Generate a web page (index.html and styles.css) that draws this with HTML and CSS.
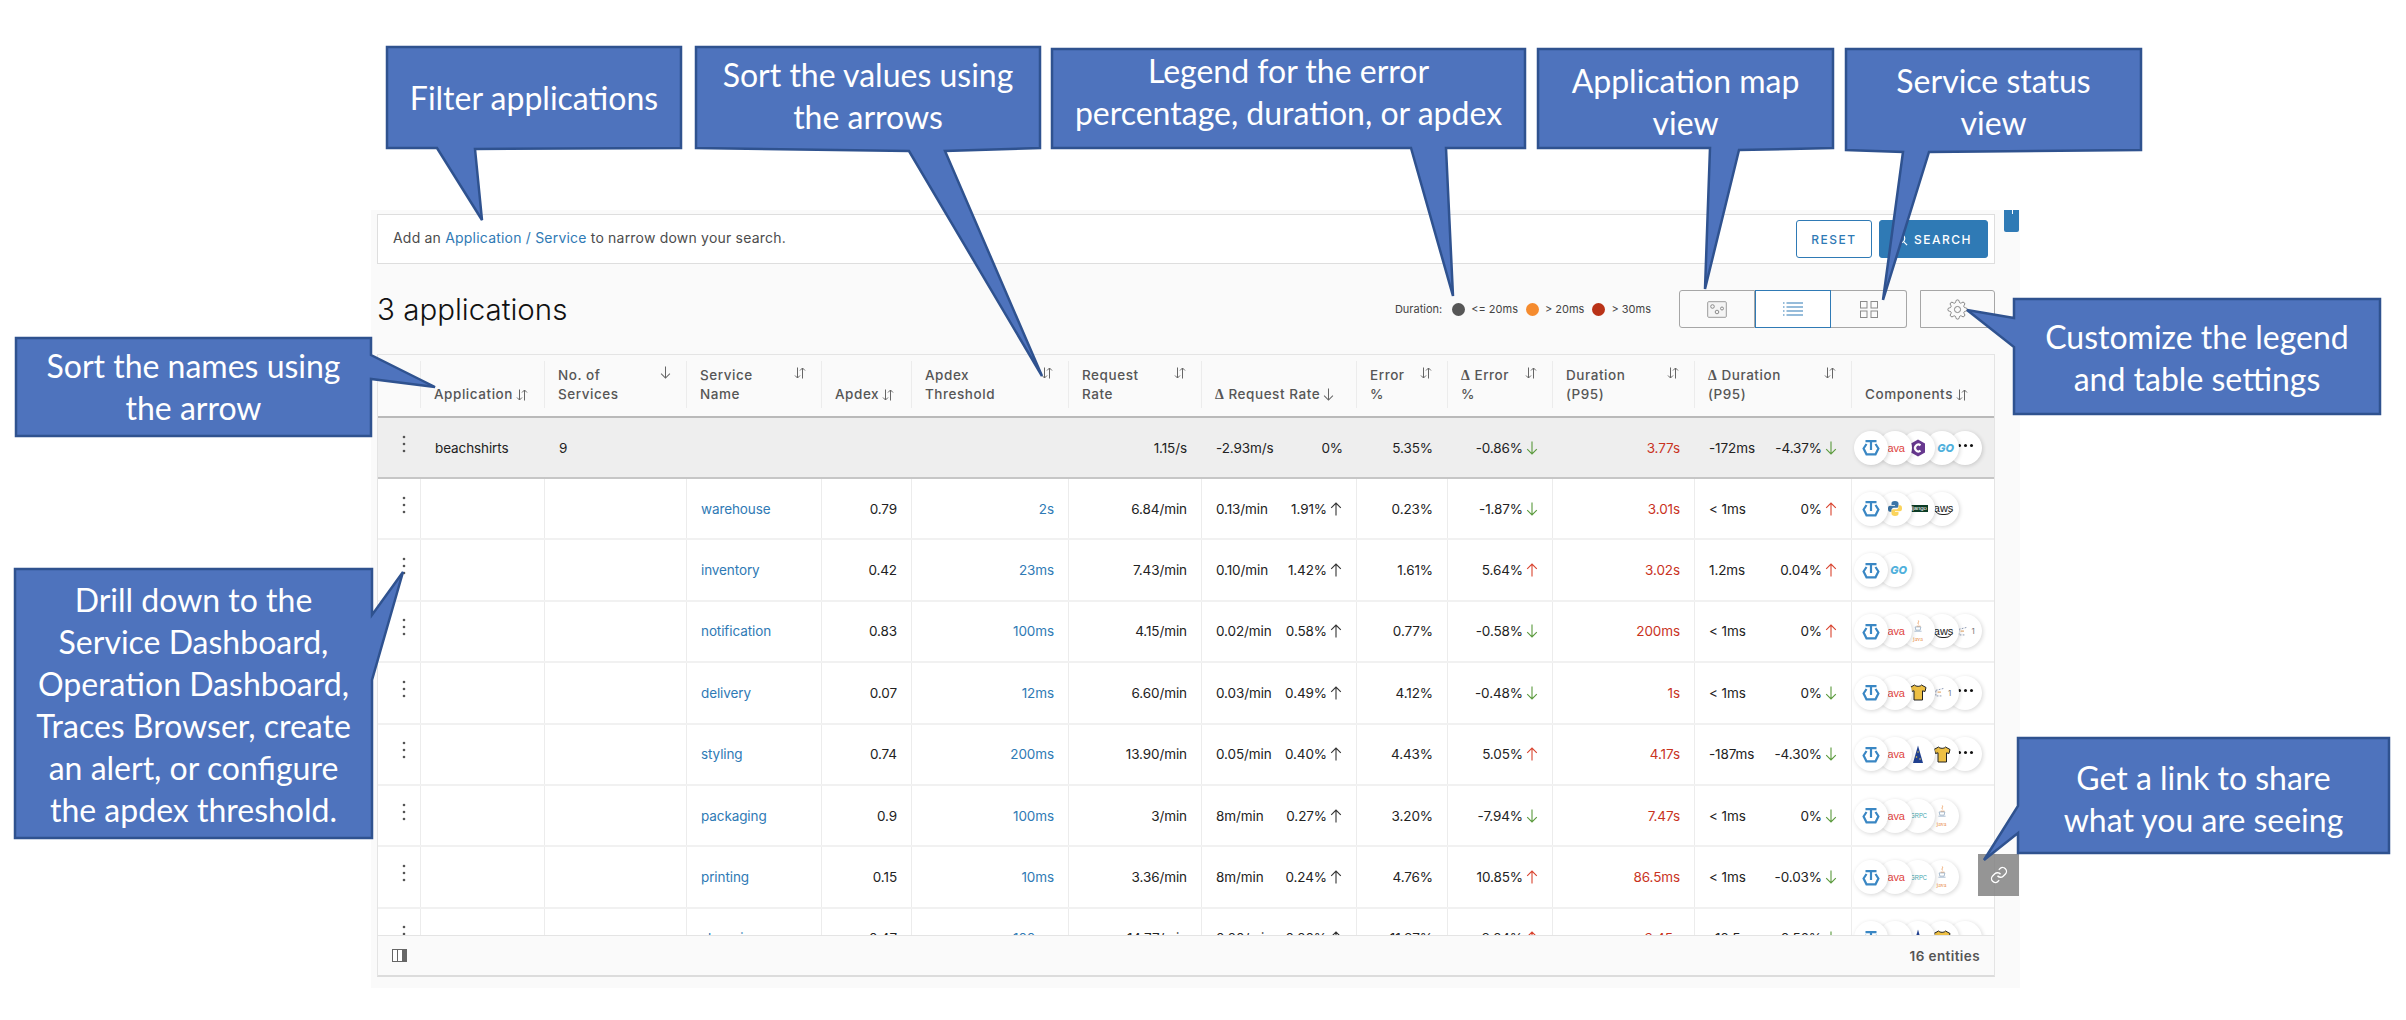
FILE: index.html
```html
<!DOCTYPE html>
<html lang="en">
<head>
<meta charset="utf-8">
<title>Applications</title>
<link rel="stylesheet" href="styles.css">
</head>
<body>
<svg class="defs" width="0" height="0" aria-hidden="true">
  <symbol id="up" viewBox="0 0 12 14"><path d="M6 13.5V1M1.2 5.8 6 1l4.8 4.8" fill="none" stroke="currentColor" stroke-width="1.1"/></symbol>
  <symbol id="down" viewBox="0 0 12 14"><path d="M6 .5V13M1.2 8.2 6 13l4.8-4.8" fill="none" stroke="currentColor" stroke-width="1.1"/></symbol>
  <symbol id="sort" viewBox="0 0 12 12"><path d="M3.500 .5v10.500M1 8.500 3.500 11 6 8.500M8.500 11.500V1M6 3.500 8.500 1 11 3.500" fill="none" stroke="currentColor" stroke-width="1"/></symbol>
  <symbol id="kebab" viewBox="0 0 4 18"><circle cx="2" cy="2" r="1.300"/><circle cx="2" cy="9" r="1.300"/><circle cx="2" cy="16" r="1.300"/></symbol>
  <symbol id="tlogo" viewBox="0 0 18 17"><path d="M4.500 5 1.600 9.500 4.500 15.300H13.500L16.400 9.500 13.500 5M3.500 2.200H14.500M9 2.200V11" fill="none" stroke="#3a87c4" stroke-width="2.200"/></symbol>
  <symbol id="python" viewBox="0 0 16 17"><path d="M8 1C5 1 4.500 2 4.500 3.500V5H8v.7H3C1.500 5.700 1 7 1 8.700s.6 3 2 3h1.500V10c0-1.300 1-2.300 2.300-2.300h3c1 0 1.700-.8 1.700-1.800V3.500C11.500 2 10.500 1 8 1z" fill="#3a75a8"/><path d="M8 16c3 0 3.500-1 3.500-2.500V12H8v-.7h5c1.500 0 2-1.300 2-3s-.6-3-2-3h-1.500V7c0 1.300-1 2.300-2.300 2.300h-3c-1 0-1.700.8-1.700 1.800v2.400C4.500 15 5.500 16 8 16z" fill="#fbd45c"/></symbol>
  <symbol id="cup" viewBox="0 0 14 22"><path d="M7.500 .5c1.500 2-1.800 3 .2 5.500M5 8.500h5.500" fill="none" stroke="#e8873a" stroke-width="1"/><path d="M3 9.500h8l-1 4.500H4zM2 15.500h10" fill="none" stroke="#8aa5c0" stroke-width="1"/></symbol>
  <symbol id="shirt" viewBox="0 0 18 17"><path d="M5.500 1 1 3.500l1.500 4L5 6.800V16h8.500V6.800l2.500.7 1-4L12.500 1C11.800 2.800 6.500 2.800 5.500 1z" fill="#eec044" stroke="#222" stroke-width="1"/></symbol>
  <symbol id="hat" viewBox="0 0 12 19"><path d="M6 .5 11 18H1z" fill="#1f3f8f"/><circle cx="6" cy="7" r=".7" fill="#f1cf45"/><circle cx="4.500" cy="12" r=".8" fill="#f1cf45"/><circle cx="8" cy="14" r=".8" fill="#f1cf45"/></symbol>
  <symbol id="csharp" viewBox="0 0 16 18"><path d="M8 .5 15 4.500v9L8 17.500 1 13.500v-9z" fill="#67388f"/><path d="M10.500 6.300A3.400 3.400 0 1 0 10.500 11.700" fill="none" stroke="#fff" stroke-width="2.200"/></symbol>
  <symbol id="dash" viewBox="0 0 14 12"><path d="M1 3.500 11 1M1 4v6h8" fill="none" stroke="#7d8ca8" stroke-width="1" stroke-dasharray="2 1.500"/><path d="M3 5.500h4" stroke="#e7b078" stroke-width="1.500"/></symbol>
  <symbol id="gear" viewBox="0 0 24 24"><circle cx="12" cy="12" r="3.500" fill="none" stroke="currentColor"/><path fill="none" stroke="currentColor" d="M19.400 15a1.650 1.650 0 0 0 .33 1.820l.06.06a2 2 0 0 1 0 2.830 2 2 0 0 1-2.830 0l-.06-.06a1.650 1.650 0 0 0-1.820-.33 1.650 1.650 0 0 0-1 1.510V21a2 2 0 0 1-2 2 2 2 0 0 1-2-2v-.09A1.650 1.650 0 0 0 9 19.400a1.650 1.650 0 0 0-1.820.33l-.06.06a2 2 0 0 1-2.830 0 2 2 0 0 1 0-2.830l.06-.06a1.650 1.650 0 0 0 .33-1.820 1.650 1.650 0 0 0-1.510-1H3a2 2 0 0 1-2-2 2 2 0 0 1 2-2h.09A1.650 1.650 0 0 0 4.600 9a1.650 1.650 0 0 0-.33-1.820l-.06-.06a2 2 0 0 1 0-2.830 2 2 0 0 1 2.830 0l.06.06a1.650 1.650 0 0 0 1.820.33H9a1.650 1.650 0 0 0 1-1.510V3a2 2 0 0 1 2-2 2 2 0 0 1 2 2v.09a1.650 1.650 0 0 0 1 1.510 1.650 1.650 0 0 0 1.820-.33l.06-.06a2 2 0 0 1 2.830 0 2 2 0 0 1 0 2.830l-.06.06a1.650 1.650 0 0 0-.33 1.820V9a1.650 1.650 0 0 0 1.510 1H21a2 2 0 0 1 2 2 2 2 0 0 1-2 2h-.09a1.650 1.650 0 0 0-1.510 1z"/></symbol>
</svg>

<main class="panel">
  <section class="filter">
    <p class="hint">Add an <a class="lnk">Application / Service</a> to narrow down your search.</p>
    <button class="btn btn-line">RESET</button>
    <button class="btn btn-solid"><svg class="ic-search" viewBox="0 0 14 14"><circle cx="6" cy="6" r="4.500" fill="none" stroke="#fff" stroke-width="1.300"/><path d="M9.500 9.500 13 13" stroke="#fff" stroke-width="1.300"/></svg>SEARCH</button>
  </section>

  <section class="bar">
    <h1 class="title">3 applications</h1>
    <div class="legend">
      <span class="leg-name">Duration:</span>
      <span class="leg-item"><i class="dot d-gray"></i>&lt;= 20ms</span>
      <span class="leg-item"><i class="dot d-orange"></i>&gt; 20ms</span>
      <span class="leg-item"><i class="dot d-red"></i>&gt; 30ms</span>
    </div>
    <div class="views">
      <button class="vbtn"><svg class="ic-map" viewBox="0 0 20 17"><rect x=".7" y=".7" width="18.600" height="15.600" rx="1" fill="#f4f4f4" stroke="#9a9a9a"/><circle cx="5.500" cy="5.500" r="1.800" fill="none" stroke="#8a8a8a"/><circle cx="10" cy="11" r="1.800" fill="none" stroke="#8a8a8a"/><circle cx="15" cy="7.500" r="1.500" fill="none" stroke="#8a8a8a"/></svg></button>
      <button class="vbtn vbtn-on"><svg class="ic-list" viewBox="0 0 20 14"><path d="M3.500 1H20M3.500 5H20M3.500 9H20M3.500 13H20M0 1h1.500M0 5h1.500M0 9h1.500M0 13h1.500" stroke="#2f7ab5" stroke-width="1.200"/></svg></button>
      <button class="vbtn"><svg class="ic-grid" viewBox="0 0 18 17"><g fill="none" stroke="#8a8a8a"><rect x=".5" y=".5" width="6.500" height="6.500"/><rect x="11" y=".5" width="6.500" height="6.500"/><rect x=".5" y="10" width="6.500" height="6.500"/><rect x="11" y="10" width="6.500" height="6.500"/></g></svg></button>
    </div>
    <button class="vbtn vbtn-solo"><svg class="ic-gear"><use href="#gear"/></svg></button>
  </section>

  <section class="table">
    <div class="row head">
      <div class="th"></div>
      <div class="th"><span>Application</span><svg class="s-in"><use href="#sort"/></svg></div>
      <div class="th th-2"><span>No. of<br>Services</span><svg class="a-top"><use href="#down"/></svg></div>
      <div class="th th-2"><span>Service<br>Name</span><svg class="s-top"><use href="#sort"/></svg></div>
      <div class="th"><span>Apdex</span><svg class="s-in"><use href="#sort"/></svg></div>
      <div class="th th-2"><span>Apdex<br>Threshold</span><svg class="s-top"><use href="#sort"/></svg></div>
      <div class="th th-2"><span>Request<br>Rate</span><svg class="s-top"><use href="#sort"/></svg></div>
      <div class="th"><span><b class="delta">Δ</b> Request Rate</span><svg class="a-in"><use href="#down"/></svg></div>
      <div class="th th-2"><span>Error<br>%</span><svg class="s-top"><use href="#sort"/></svg></div>
      <div class="th th-2"><span><b class="delta">Δ</b> Error<br>%</span><svg class="s-top"><use href="#sort"/></svg></div>
      <div class="th th-2"><span>Duration<br>(P95)</span><svg class="s-top"><use href="#sort"/></svg></div>
      <div class="th th-2"><span><b class="delta">Δ</b> Duration<br>(P95)</span><svg class="s-top"><use href="#sort"/></svg></div>
      <div class="th th-end"><span>Components</span><svg class="s-in"><use href="#sort"/></svg></div>
    </div>

    <div class="row group">
      <div class="td td-k"><svg class="kebab"><use href="#kebab"/></svg></div>
      <div class="td">beachshirts</div>
      <div class="td">9</div>
      <div class="td"></div>
      <div class="td"></div>
      <div class="td"></div>
      <div class="td r">1.15/s</div>
      <div class="td sp"><span>-2.93m/s</span><span class="pct0">0%</span></div>
      <div class="td r">5.35%</div>
      <div class="td r">-0.86%<svg class="ar ar-g"><use href="#down"/></svg></div>
      <div class="td r red">3.77s</div>
      <div class="td sp"><span>-172ms</span><span class="pa">-4.37%<svg class="ar ar-g"><use href="#down"/></svg></span></div>
      <div class="td comps">
        <span class="ci"><svg class="lg-t"><use href="#tlogo"/></svg></span><span class="ci"><span class="java">java</span></span><span class="ci"><svg class="lg-c"><use href="#csharp"/></svg></span><span class="ci"><span class="go">GO</span></span><span class="ci"><span class="more"><i></i><i></i><i></i></span></span>
      </div>
    </div>

    <div class="rows">
      <div class="row">
        <div class="td td-k"><svg class="kebab"><use href="#kebab"/></svg></div><div class="td"></div><div class="td"></div>
        <div class="td"><a class="lnk">warehouse</a></div><div class="td r">0.79</div><div class="td r"><a class="lnk">2s</a></div><div class="td r">6.84/min</div>
        <div class="td sp"><span>0.13/min</span><span class="pa">1.91%<svg class="ar"><use href="#up"/></svg></span></div>
        <div class="td r">0.23%</div><div class="td r">-1.87%<svg class="ar ar-g"><use href="#down"/></svg></div><div class="td r red">3.01s</div>
        <div class="td sp"><span>&lt; 1ms</span><span class="pa">0%<svg class="ar ar-r"><use href="#up"/></svg></span></div>
        <div class="td comps"><span class="ci"><svg class="lg-t"><use href="#tlogo"/></svg></span><span class="ci"><svg class="lg-p"><use href="#python"/></svg></span><span class="ci"><span class="django">django</span></span><span class="ci"><span class="aws">aws</span></span></div>
      </div>
      <div class="row">
        <div class="td td-k"><svg class="kebab"><use href="#kebab"/></svg></div><div class="td"></div><div class="td"></div>
        <div class="td"><a class="lnk">inventory</a></div><div class="td r">0.42</div><div class="td r"><a class="lnk">23ms</a></div><div class="td r">7.43/min</div>
        <div class="td sp"><span>0.10/min</span><span class="pa">1.42%<svg class="ar"><use href="#up"/></svg></span></div>
        <div class="td r">1.61%</div><div class="td r">5.64%<svg class="ar ar-r"><use href="#up"/></svg></div><div class="td r red">3.02s</div>
        <div class="td sp"><span>1.2ms</span><span class="pa">0.04%<svg class="ar ar-r"><use href="#up"/></svg></span></div>
        <div class="td comps"><span class="ci"><svg class="lg-t"><use href="#tlogo"/></svg></span><span class="ci"><span class="go">GO</span></span></div>
      </div>
      <div class="row">
        <div class="td td-k"><svg class="kebab"><use href="#kebab"/></svg></div><div class="td"></div><div class="td"></div>
        <div class="td"><a class="lnk">notification</a></div><div class="td r">0.83</div><div class="td r"><a class="lnk">100ms</a></div><div class="td r">4.15/min</div>
        <div class="td sp"><span>0.02/min</span><span class="pa">0.58%<svg class="ar"><use href="#up"/></svg></span></div>
        <div class="td r">0.77%</div><div class="td r">-0.58%<svg class="ar ar-g"><use href="#down"/></svg></div><div class="td r red">200ms</div>
        <div class="td sp"><span>&lt; 1ms</span><span class="pa">0%<svg class="ar ar-r"><use href="#up"/></svg></span></div>
        <div class="td comps"><span class="ci"><svg class="lg-t"><use href="#tlogo"/></svg></span><span class="ci"><span class="java">java</span></span><span class="ci"><span class="jlogo"><svg class="lg-j"><use href="#cup"/></svg><span>java</span></span></span><span class="ci"><span class="aws">aws</span></span><span class="ci"><span class="one"><svg class="lg-d"><use href="#dash"/></svg>1</span></span></div>
      </div>
      <div class="row">
        <div class="td td-k"><svg class="kebab"><use href="#kebab"/></svg></div><div class="td"></div><div class="td"></div>
        <div class="td"><a class="lnk">delivery</a></div><div class="td r">0.07</div><div class="td r"><a class="lnk">12ms</a></div><div class="td r">6.60/min</div>
        <div class="td sp"><span>0.03/min</span><span class="pa">0.49%<svg class="ar"><use href="#up"/></svg></span></div>
        <div class="td r">4.12%</div><div class="td r">-0.48%<svg class="ar ar-g"><use href="#down"/></svg></div><div class="td r red">1s</div>
        <div class="td sp"><span>&lt; 1ms</span><span class="pa">0%<svg class="ar ar-g"><use href="#down"/></svg></span></div>
        <div class="td comps"><span class="ci"><svg class="lg-t"><use href="#tlogo"/></svg></span><span class="ci"><span class="java">java</span></span><span class="ci"><svg class="lg-s"><use href="#shirt"/></svg></span><span class="ci"><span class="one"><svg class="lg-d"><use href="#dash"/></svg>1</span></span><span class="ci"><span class="more"><i></i><i></i><i></i></span></span></div>
      </div>
      <div class="row">
        <div class="td td-k"><svg class="kebab"><use href="#kebab"/></svg></div><div class="td"></div><div class="td"></div>
        <div class="td"><a class="lnk">styling</a></div><div class="td r">0.74</div><div class="td r"><a class="lnk">200ms</a></div><div class="td r">13.90/min</div>
        <div class="td sp"><span>0.05/min</span><span class="pa">0.40%<svg class="ar"><use href="#up"/></svg></span></div>
        <div class="td r">4.43%</div><div class="td r">5.05%<svg class="ar ar-r"><use href="#up"/></svg></div><div class="td r red">4.17s</div>
        <div class="td sp"><span>-187ms</span><span class="pa">-4.30%<svg class="ar ar-g"><use href="#down"/></svg></span></div>
        <div class="td comps"><span class="ci"><svg class="lg-t"><use href="#tlogo"/></svg></span><span class="ci"><span class="java">java</span></span><span class="ci"><svg class="lg-h"><use href="#hat"/></svg></span><span class="ci"><svg class="lg-s"><use href="#shirt"/></svg></span><span class="ci"><span class="more"><i></i><i></i><i></i></span></span></div>
      </div>
      <div class="row">
        <div class="td td-k"><svg class="kebab"><use href="#kebab"/></svg></div><div class="td"></div><div class="td"></div>
        <div class="td"><a class="lnk">packaging</a></div><div class="td r">0.9</div><div class="td r"><a class="lnk">100ms</a></div><div class="td r">3/min</div>
        <div class="td sp"><span>8m/min</span><span class="pa">0.27%<svg class="ar"><use href="#up"/></svg></span></div>
        <div class="td r">3.20%</div><div class="td r">-7.94%<svg class="ar ar-g"><use href="#down"/></svg></div><div class="td r red">7.47s</div>
        <div class="td sp"><span>&lt; 1ms</span><span class="pa">0%<svg class="ar ar-g"><use href="#down"/></svg></span></div>
        <div class="td comps"><span class="ci"><svg class="lg-t"><use href="#tlogo"/></svg></span><span class="ci"><span class="java">java</span></span><span class="ci"><span class="grpc">GRPC</span></span><span class="ci"><span class="jlogo"><svg class="lg-j"><use href="#cup"/></svg><span>java</span></span></span></div>
      </div>
      <div class="row">
        <div class="td td-k"><svg class="kebab"><use href="#kebab"/></svg></div><div class="td"></div><div class="td"></div>
        <div class="td"><a class="lnk">printing</a></div><div class="td r">0.15</div><div class="td r"><a class="lnk">10ms</a></div><div class="td r">3.36/min</div>
        <div class="td sp"><span>8m/min</span><span class="pa">0.24%<svg class="ar"><use href="#up"/></svg></span></div>
        <div class="td r">4.76%</div><div class="td r">10.85%<svg class="ar ar-r"><use href="#up"/></svg></div><div class="td r red">86.5ms</div>
        <div class="td sp"><span>&lt; 1ms</span><span class="pa">-0.03%<svg class="ar ar-g"><use href="#down"/></svg></span></div>
        <div class="td comps"><span class="ci"><svg class="lg-t"><use href="#tlogo"/></svg></span><span class="ci"><span class="java">java</span></span><span class="ci"><span class="grpc">GRPC</span></span><span class="ci"><span class="jlogo"><svg class="lg-j"><use href="#cup"/></svg><span>java</span></span></span></div>
      </div>
      <div class="row">
        <div class="td td-k"><svg class="kebab"><use href="#kebab"/></svg></div><div class="td"></div><div class="td"></div>
        <div class="td"><a class="lnk">shopping</a></div><div class="td r">0.47</div><div class="td r"><a class="lnk">100ms</a></div><div class="td r">14.77/min</div>
        <div class="td sp"><span>0.20/min</span><span class="pa">0.20%<svg class="ar"><use href="#up"/></svg></span></div>
        <div class="td r">11.87%</div><div class="td r">8.24%<svg class="ar ar-r"><use href="#up"/></svg></div><div class="td r red">3.45s</div>
        <div class="td sp"><span>-12.5ms</span><span class="pa">-0.56%<svg class="ar ar-g"><use href="#down"/></svg></span></div>
        <div class="td comps"><span class="ci"><svg class="lg-t"><use href="#tlogo"/></svg></span><span class="ci"><span class="java">java</span></span><span class="ci"><svg class="lg-h"><use href="#hat"/></svg></span><span class="ci"><svg class="lg-s"><use href="#shirt"/></svg></span><span class="ci"><span class="more"><i></i><i></i><i></i></span></span></div>
      </div>
    </div>

    <footer class="foot">
      <svg class="ic-cols" viewBox="0 0 15 13"><rect x=".5" y=".5" width="14" height="12" fill="#fff" stroke="#666"/><rect x="10" y="1" width="4" height="11" fill="#666"/><path d="M5.500 1v11" stroke="#666"/></svg>
      <span class="count">16 entities</span>
    </footer>
  </section>
</main>

<div class="tab"></div>
<button class="share"><svg class="ic-link" viewBox="0 0 24 24"><path d="M10 13a5 5 0 0 0 7.540.54l3-3a5 5 0 0 0-7.070-7.070l-1.720 1.710M14 11a5 5 0 0 0-7.540-.54l-3 3a5 5 0 0 0 7.070 7.070l1.710-1.710" fill="none" stroke="#fff" stroke-width="1.800"/></svg></button>

<svg class="shapes" viewBox="0 0 2406 1020" aria-hidden="true">
  <polygon points="387,47 681,47 681,148 475,149 482,220 437,148 387,148"/>
  <polygon points="696,47 1040,47 1040,148 945,151 1042,376 909,151 696,148"/>
  <polygon points="1052,49 1525,49 1525,148 1446,148 1453,296 1411,148 1052,148"/>
  <polygon points="1538,49 1833,49 1833,148 1739,150 1705,289 1710,148 1538,148"/>
  <polygon points="1846,49 2141,49 2141,150 1929,152 1883,300 1903,152 1846,150"/>
  <polygon points="2014,299 2380,299 2380,414 2014,414 2014,347 1967,310 2014,318"/>
  <polygon points="16,338 371,338 371,355 435,387 371,379 371,436 16,436"/>
  <polygon points="15,569 372,569 372,615 403,572 372,680 372,838 15,838"/>
  <polygon points="2018,738 2389,738 2389,853 2018,853 2018,833 1984,860 2018,806"/>
</svg>

<div class="note n-filter">Filter applications</div>
<div class="note n-sort">Sort the values using<br>the arrows</div>
<div class="note n-legend">Legend for the error<br>percentage, duration, or apdex</div>
<div class="note n-map">Application map<br>view</div>
<div class="note n-status">Service status<br>view</div>
<div class="note n-custom">Customize the legend<br>and table settings</div>
<div class="note n-names">Sort the names using<br>the arrow</div>
<div class="note n-drill">Drill down to the<br>Service Dashboard,<br>Operation Dashboard,<br>Traces Browser, create<br>an alert, or configure<br>the apdex threshold.</div>
<div class="note n-link">Get a link to share<br>what you are seeing</div>
</body>
</html>
```
FILE: styles.css
```css
* { box-sizing: border-box; }
html, body { margin: 0; padding: 0; }
body {
  position: relative;
  width: 2406px;
  height: 1020px;
  overflow: hidden;
  background: #fff;
  font-family: "Inter", "Liberation Sans", sans-serif;
  font-size: 13.5px;
  color: #222;
}
.defs { position: absolute; }
button { font-family: inherit; cursor: pointer; }
.lnk { color: #2f7ab5; }

.panel {
  width: 1649px;
  height: 778px;
  margin: 210px 0 0 371px;
  padding: 4px 25px 11px 6px;
  background: #fafafa;
  display: flex;
  flex-direction: column;
}

.filter {
  height: 50px;
  flex: none;
  display: flex;
  align-items: center;
  gap: 7px;
  padding: 0 6px 0 15px;
  background: #fff;
  border: 1px solid #dedede;
}
.hint { margin: 0 auto 4px 0; font-size: 14px; letter-spacing: .2px; color: #4c4c4c; }
.btn {
  height: 38px;
  border-radius: 3px;
  font-size: 12px;
  font-weight: 500;
  letter-spacing: 1.5px;
  border: 1px solid #2f7ab5;
  display: flex;
  align-items: center;
  justify-content: center;
}
.btn-line { width: 76px; background: #fff; color: #2f7ab5; }
.btn-solid { width: 109px; background: #2f7ab5; color: #fff; gap: 6px; }
.ic-search { width: 13px; height: 13px; }

.bar {
  height: 90px;
  flex: none;
  display: flex;
  align-items: center;
}
.title {
  margin: 0 auto 0 0;
  font-size: 29.5px;
  font-weight: 300;
  color: #111;
}
.legend {
  display: flex;
  align-items: center;
  gap: 8px;
  font-size: 11px;
  color: #444;
  margin-right: 28px;
}
.leg-name { margin-right: 2px; }
.leg-item { display: flex; align-items: center; gap: 6px; }
.dot { width: 13px; height: 13px; border-radius: 50%; display: block; }
.d-gray { background: #565656; }
.d-orange { background: #f58b2e; }
.d-red { background: #b93217; }
.views { display: flex; }
.vbtn {
  width: 76px;
  height: 38px;
  padding: 0;
  display: flex;
  align-items: center;
  justify-content: center;
  background: #fafafa;
  border: 1px solid #a6a6a6;
  border-left: 0;
}
.vbtn:first-child { border-left: 1px solid #a6a6a6; border-radius: 3px 0 0 3px; }
.vbtn:last-child { border-radius: 0 3px 3px 0; }
.vbtn-on { border: 1px solid #2f7ab5; background: #fff; }
.vbtn-solo { width: 75px; margin-left: 13px; border-left: 1px solid #a6a6a6; border-radius: 3px; color: #777; }
.ic-map { width: 20px; height: 17px; }
.ic-list { width: 20px; height: 14px; }
.ic-grid { width: 18px; height: 17px; }
.ic-gear { width: 21px; height: 21px; }

.table {
  flex: 1;
  min-height: 0;
  display: flex;
  flex-direction: column;
  border: 1px solid #e4e4e4;
  border-bottom: 2px solid #dcdcdc;
  background: #fff;
}
.row {
  display: grid;
  grid-template-columns: 43px 124px 142px 135px 90px 157px 133px 155px 91px 105px 142px 157px 142px;
  flex: none;
}
.head {
  height: 63px;
  padding: 6px 0 8px;
  background: #fafafa;
  border-bottom: 2px solid #b9b9b9;
  color: #565656;
  font-weight: 500;
  font-size: 13.5px;
  letter-spacing: .55px;
  line-height: 19px;
}
.th {
  display: flex;
  align-items: flex-end;
  justify-content: flex-start;
  gap: 3px;
  padding: 0 0 4px 13px;
  border-right: 1px solid #ececec;
}
.th-2 { justify-content: space-between; padding-right: 15px; }
.th-end { border-right: 0; }
.delta { font-family: "Liberation Serif", serif; font-weight: 700; font-size: 14px; }
.s-in, .s-top { width: 12px; height: 12px; flex: none; color: #666; }
.s-in { margin-bottom: 3px; }
.s-top { align-self: flex-start; margin-top: 6px; }
.a-top, .a-in { width: 11px; height: 13px; flex: none; color: #666; }
.a-top { align-self: flex-start; margin-top: 5px; }
.a-in { margin-bottom: 3px; }

.group {
  height: 61px;
  background: #eee;
  border-bottom: 2px solid #c6c6c6;
}
.rows { flex: 1; min-height: 0; overflow: hidden; }
.rows .row { height: 61.4px; border-bottom: 2px solid #f1f1f1; }
.td {
  display: flex;
  align-items: center;
  padding: 0 14px;
  border-right: 1px solid #ececec;
  letter-spacing: -.1px;
  white-space: nowrap;
  color: #222;
}
.group .td { border-right-color: transparent; }
.td:last-child { border-right: 0; }
.r { justify-content: flex-end; }
.sp { justify-content: space-between; }
.red { color: #c9331e; }
.td-k { padding: 0 0 8px 24px; }
.kebab { width: 4px; height: 18px; fill: #555; }
.pa { display: flex; align-items: center; }
.pct0 { margin-right: -1px; }
.ar { width: 12px; height: 14px; margin-left: 3px; color: #333; flex: none; }
.ar-g { color: #5a9a3c; }
.ar-r { color: #d9442f; }

.comps { padding: 0 0 0 2px; }
.ci {
  position: relative;
  width: 34px;
  height: 34px;
  flex: none;
  margin-left: -10.5px;
  border-radius: 50%;
  background: #fff;
  box-shadow: 1px 1px 4px rgba(0, 0, 0, .16);
  display: flex;
  align-items: center;
  justify-content: center;
  overflow: hidden;
}
.ci:first-child { margin-left: 0; }
.ci:nth-child(1) { z-index: 5; }
.ci:nth-child(2) { z-index: 4; }
.ci:nth-child(3) { z-index: 3; }
.ci:nth-child(4) { z-index: 2; }
.ci:nth-child(5) { z-index: 1; }
.lg-t { width: 18px; height: 17px; }
.lg-c { width: 16px; height: 18px; }
.lg-p { width: 16px; height: 17px; }
.lg-s { width: 18px; height: 17px; }
.lg-h { width: 12px; height: 19px; }
.java { color: #e0443e; font-size: 11px; font-weight: 500; margin-left: 1px; font-family: "Liberation Sans", sans-serif; }
.go { color: #4fb0dc; font-size: 11px; font-weight: 800; font-style: italic; margin-left: 8px; }
.django { background: #0c3c26; color: #fff; font-size: 6px; line-height: 7px; padding: 0 1px; font-family: "Liberation Sans", sans-serif; }
.aws { color: #222; font-size: 11px; font-weight: 500; line-height: 12px; border-bottom: 1px solid #222; border-radius: 0 0 8px 8px; margin-left: 4px; font-family: "Liberation Sans", sans-serif; }
.grpc { color: #42a5ad; font-size: 8px; letter-spacing: 0; transform: scaleX(.72); margin-left: 2px; font-family: "Liberation Sans", sans-serif; }
.jlogo { display: flex; flex-direction: column; align-items: center; color: #e8873a; font-size: 6px; line-height: 6px; letter-spacing: 0; font-family: "Liberation Serif", serif; }
.lg-j { width: 10px; height: 16px; }
.one { display: flex; align-items: center; gap: 1px; color: #777; font-size: 8px; margin-left: 3px; }
.lg-d { width: 12px; height: 11px; }
.more { display: flex; gap: 3px; margin-bottom: 4px; }
.more i { width: 3px; height: 3px; border-radius: 50%; background: #111; display: block; }

.foot {
  position: relative;
  height: 40px;
  flex: none;
  display: flex;
  align-items: center;
  justify-content: space-between;
  padding: 0 14px 0 14px;
  background: #fafafa;
  border-top: 1px solid #e4e4e4;
}
.ic-cols { width: 15px; height: 13px; margin-bottom: 1px; }
.count { font-weight: 600; color: #555; font-size: 13.5px; letter-spacing: .4px; }

.tab {
  position: absolute;
  left: 2004px;
  top: 210px;
  width: 15px;
  height: 22px;
  background: #2f7ab5;
  border-radius: 0 0 2px 2px;
}
.tab::after {
  content: "";
  display: block;
  width: 1px;
  height: 4px;
  margin-left: 8px;
  background: #fff;
}
.share {
  position: absolute;
  left: 1978px;
  top: 854px;
  width: 41px;
  height: 42px;
  padding: 0;
  border: 0;
  background: rgba(130, 130, 130, .85);
  display: flex;
  align-items: center;
  justify-content: center;
}
.ic-link { width: 18px; height: 18px; }

.shapes {
  position: absolute;
  left: 0;
  top: 0;
  width: 2406px;
  height: 1020px;
  pointer-events: none;
}
.shapes polygon { fill: #4e73bd; stroke: #2f528f; stroke-width: 2.5; }

.note {
  position: absolute;
  display: flex;
  align-items: center;
  justify-content: center;
  text-align: center;
  color: #fff;
  font-family: "Lato", "Open Sans", sans-serif;
  font-size: 32px;
  line-height: 42px;
  white-space: nowrap;
}
.n-filter { left: 387px; top: 47px; width: 294px; height: 101px; }
.n-sort { left: 696px; top: 45px; width: 344px; height: 101px; }
.n-legend { left: 1052px; top: 42px; width: 473px; height: 100px; }
.n-map { left: 1538px; top: 52px; width: 295px; height: 100px; }
.n-status { left: 1846px; top: 52px; width: 295px; height: 100px; }
.n-custom { left: 2014px; top: 300px; width: 366px; height: 115px; }
.n-names { left: 16px; top: 338px; width: 355px; height: 98px; }
.n-drill { left: 15px; top: 570px; width: 357px; height: 269px; }
.n-link { left: 2018px; top: 741px; width: 371px; height: 115px; }
```
